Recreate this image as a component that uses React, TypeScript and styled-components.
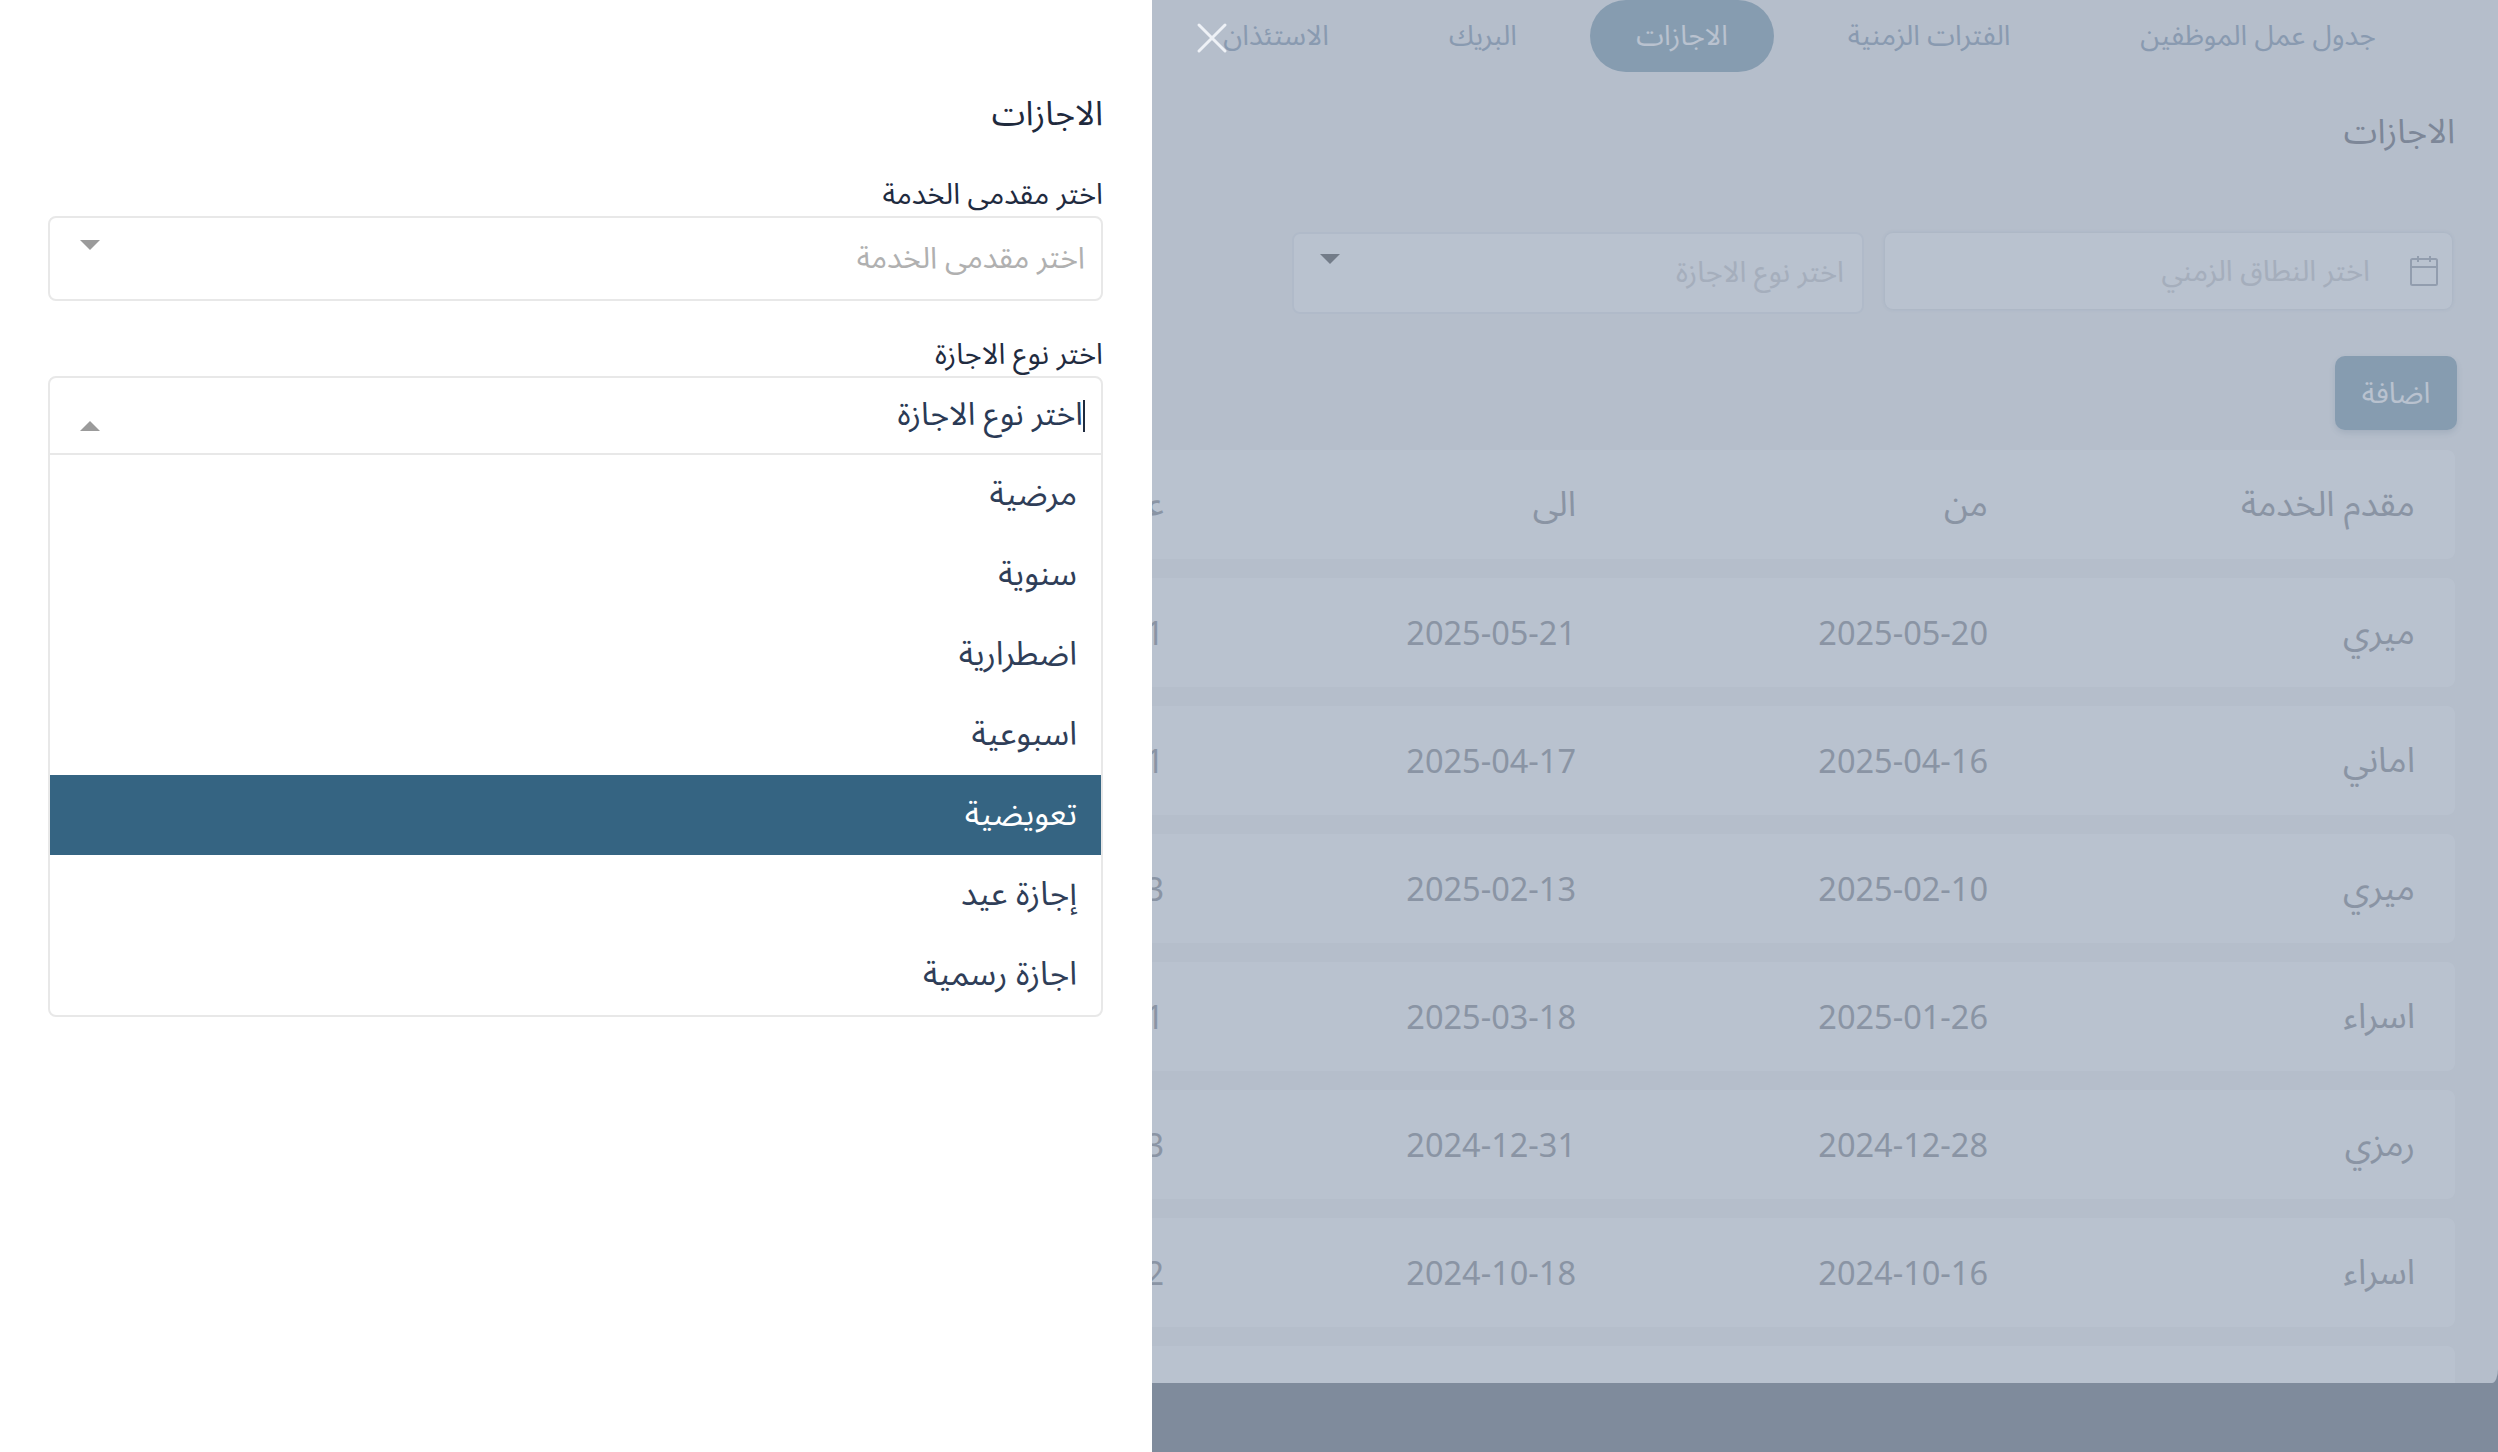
import React from 'react';
import styled, { createGlobalStyle } from 'styled-components';

const FONT = `"Noto Sans Arabic", "Cairo", "Open Sans", "DejaVu Sans", sans-serif`;

const Global = createGlobalStyle`
  html, body { margin: 0; padding: 0; height: 100%; background: #f9f9f9; }
  body { font-family: ${FONT}; overflow: hidden; }
  * { box-sizing: border-box; }
`;

const Page = styled.div`
  position: relative;
  width: 2498px;
  height: 1452px;
  overflow: hidden;
  direction: rtl;
  background: #acb0b6;
  display: flex;
  flex-direction: column;
`;

const Content = styled.main`
  height: 1383px;
  flex: none;
  background: #f9f9f9;
  overflow: hidden;
  padding: 0 43px 0 41px;
  border-bottom-right-radius: 6px 14px;
  display: flex;
  flex-direction: column;
`;

const Tabs = styled.nav`
  flex: none;
  display: flex;
  align-items: center;
  height: 72px;
  padding-right: 23px;
`;

const Tab = styled.a<{ $active?: boolean; $w: number }>`
  width: ${p => p.$w}px;
  height: 72px;
  font-size: 28px;
  white-space: nowrap;
  display: flex;
  align-items: center;
  justify-content: center;
  border-radius: 36px;
  color: ${p => (p.$active ? '#ffffff' : '#bac6d3')};
  background: ${p => (p.$active ? '#b6c9d3' : 'transparent')};
`;

const PageTitle = styled.h1`
  flex: none;
  margin: 24px 0 0;
  font-size: 34px;
  line-height: 72px;
  font-weight: 400;
  color: #a9abb0;
`;

const Filters = styled.div`
  flex: none;
  display: flex;
  align-items: flex-start;
  gap: 21px;
  margin-top: 65px;
  padding-right: 3px;
`;

const DateField = styled.div`
  width: 567px;
  height: 76px;
  display: flex;
  align-items: center;
  gap: 40px;
  padding: 0 14px 0 0;
  border-radius: 8px;
  background: #ffffff;
  color: #e2e2e4;
  font-size: 29px;
  box-shadow: 0 0 4px rgba(60, 90, 130, 0.12);
`;

const FilterSelect = styled.div`
  width: 572px;
  height: 82px;
  margin-top: -1px;
  position: relative;
  padding: 0 18px;
  border-radius: 8px;
  background: #ffffff;
  border: 2px solid #f3f4f6;
  color: #e2e2e4;
  font-size: 29px;
  line-height: 78px;
`;

const Caret = styled.span<{ $up?: boolean; $top: number; $left: number }>`
  position: absolute;
  top: ${p => p.$top}px;
  left: ${p => p.$left}px;
  width: 0;
  height: 0;
  border-left: 10px solid transparent;
  border-right: 10px solid transparent;
  ${p => (p.$up ? 'border-bottom' : 'border-top')}: 10px solid #9b9b9b;
`;

const AddButton = styled.button`
  flex: none;
  align-self: flex-start;
  margin: 42px -2px 0 0;
  width: 122px;
  height: 74px;
  padding: 0;
  border: 0;
  border-radius: 10px;
  background: #b6c9d3;
  color: #ffffff;
  font: 29px ${FONT};
  box-shadow: 0 3px 6px rgba(40, 70, 100, 0.12);
`;

const Table = styled.div`
  flex: none;
  margin-top: 20px;
  display: flex;
  flex-direction: column;
  gap: 19px;
`;

const Row = styled.div`
  height: 109px;
  flex: none;
  display: grid;
  grid-template-columns: 427px 412px 412px 412px 412px;
  padding-right: 40px;
  align-items: center;
  background: #ffffff;
  border-radius: 8px;
  color: #bcbec2;
  white-space: nowrap;
`;

const Cell = styled.div<{ $num?: boolean }>`
  unicode-bidi: plaintext;
  text-align: right;
  direction: rtl;
  font-size: ${p => (p.$num ? '32.5px' : '35px')};
  padding-top: ${p => (p.$num ? '3px' : '0')};
`;

const Footer = styled.footer`
  flex: 1;
`;

const Mask = styled.div`
  position: absolute;
  inset: 0;
  background: rgba(22, 52, 95, 0.3);
`;

const CloseButton = styled.button`
  position: absolute;
  left: 1196px;
  top: 22px;
  width: 32px;
  height: 32px;
  padding: 0;
  border: 0;
  background: transparent;
  color: #eef1f6;
  display: flex;
`;

const Drawer = styled.aside`
  position: absolute;
  left: 0;
  top: 0;
  bottom: 0;
  width: 1152px;
  background: #ffffff;
  padding: 0 49px 0 48px;
  color: #1f2b3f;
  text-align: right;
`;

const DrawerTitle = styled.h2`
  margin: 88px 0 0;
  font-size: 34px;
  line-height: 52px;
  font-weight: 400;
  color: #1f2a3d;
`;

const Label = styled.label<{ $gap: number }>`
  display: block;
  margin-top: ${p => p.$gap}px;
  margin-bottom: 1px;
  font-size: 29px;
  line-height: 40px;
  color: #1f2b3f;
`;

const SelectBox = styled.div`
  position: relative;
  border: 2px solid #e8e8e8;
  border-radius: 8px;
  overflow: hidden;
`;

const SelectControl = styled.div<{ $open?: boolean }>`
  position: relative;
  height: ${p => (p.$open ? '75px' : '81px')};
  padding-right: 16px;
  font-size: ${p => (p.$open ? '32px' : '30px')};
  line-height: ${p => (p.$open ? '75px' : '81px')};
  color: ${p => (p.$open ? '#2a3a55' : '#b0b0b0')};
`;

const TextCursor = styled.span`
  display: inline-block;
  width: 2px;
  height: 32px;
  background: #1f2b3f;
  vertical-align: middle;
`;

const Menu = styled.ul`
  list-style: none;
  margin: 0;
  padding: 0;
  border-top: 2px solid #e8e8e8;
`;

const Option = styled.li<{ $active?: boolean }>`
  height: 80px;
  padding-right: 24px;
  font-size: 33px;
  line-height: 80px;
  color: ${p => (p.$active ? '#ffffff' : '#2f3e58')};
  background: ${p => (p.$active ? '#356482' : 'transparent')};
`;

const rows = [
  ['ميري', '2025-05-20', '2025-05-21', '1'],
  ['اماني', '2025-04-16', '2025-04-17', '1'],
  ['ميري', '2025-02-10', '2025-02-13', '3'],
  ['اسراء', '2025-01-26', '2025-03-18', '1'],
  ['رمزي', '2024-12-28', '2024-12-31', '3'],
  ['اسراء', '2024-10-16', '2024-10-18', '2'],
  ['', '', '', ''],
];

const options = ['مرضية', 'سنوية', 'اضطرارية', 'اسبوعية', 'تعويضية', 'إجازة عيد', 'اجازة رسمية'];

export default function App() {
  return (
    <>
      <Global />
      <Page>
        <Content>
          <Tabs>
            <Tab $w={348}>جدول عمل الموظفين</Tab>
            <Tab $w={310}>الفترات الزمنية</Tab>
            <Tab $w={184} $active>الاجازات</Tab>
            <Tab $w={214}>البريك</Tab>
            <Tab $w={200}>الاستئذان</Tab>
          </Tabs>
          <PageTitle>الاجازات</PageTitle>
          <Filters>
            <DateField>
              <svg width="28" height="30" viewBox="0 0 28 30" fill="none" stroke="#c8cad0" strokeWidth="2">
                <rect x="1" y="3" width="26" height="26" rx="1.5" />
                <path d="M1 11h26M8 0v6M20 0v6" />
              </svg>
              اختر النطاق الزمني
            </DateField>
            <FilterSelect>
              اختر نوع الاجازة
              <Caret $top={20} $left={26} />
            </FilterSelect>
          </Filters>
          <AddButton>اضافة</AddButton>
          <Table>
            <Row>
              <Cell>مقدم الخدمة</Cell>
              <Cell>من</Cell>
              <Cell>الى</Cell>
              <Cell>عدد الايام</Cell>
            </Row>
            {rows.map((r, i) => (
              <Row key={i}>
                {r.map((c, j) => (
                  <Cell key={j} $num={j > 0}>{c}</Cell>
                ))}
              </Row>
            ))}
          </Table>
        </Content>
        <Footer />
        <Mask />
        <CloseButton aria-label="close">
          <svg width="32" height="32" viewBox="0 0 32 32" stroke="currentColor" strokeWidth="3" strokeLinecap="round">
            <path d="M3 3l26 26M29 3L3 29" />
          </svg>
        </CloseButton>
        <Drawer>
          <DrawerTitle>الاجازات</DrawerTitle>
          <Label $gap={35}>اختر مقدمى الخدمة</Label>
          <SelectBox>
            <SelectControl>
              اختر مقدمى الخدمة
              <Caret $top={22} $left={30} />
            </SelectControl>
          </SelectBox>
          <Label $gap={34}>اختر نوع الاجازة</Label>
          <SelectBox>
            <SelectControl $open>
              <TextCursor />
              اختر نوع الاجازة
              <Caret $up $top={43} $left={30} />
            </SelectControl>
            <Menu>
              {options.map(o => (
                <Option key={o} $active={o === 'تعويضية'}>{o}</Option>
              ))}
            </Menu>
          </SelectBox>
        </Drawer>
      </Page>
    </>
  );
}
